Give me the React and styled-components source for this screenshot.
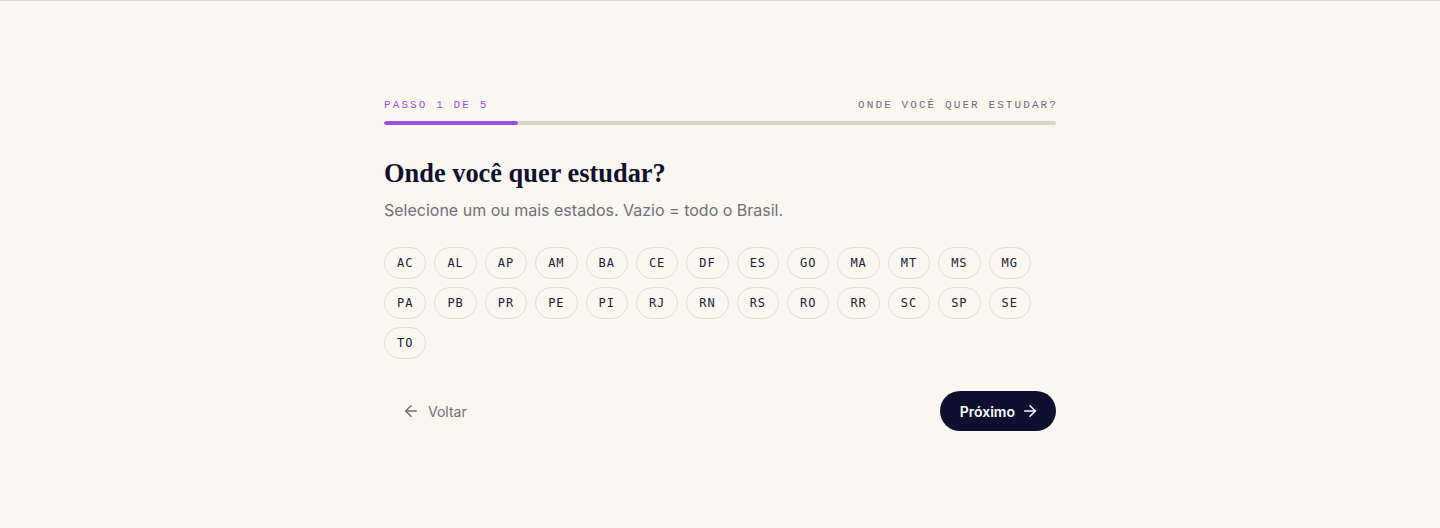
import React, { useState } from "react";
import styled, { createGlobalStyle } from "styled-components";
import { ArrowLeft, ArrowRight } from "lucide-react";

const STATES = [
  "AC", "AL", "AP", "AM", "BA", "CE", "DF", "ES", "GO", "MA", "MT", "MS", "MG",
  "PA", "PB", "PR", "PE", "PI", "RJ", "RN", "RS", "RO", "RR", "SC", "SP", "SE",
  "TO",
];

const TOTAL_STEPS = 5;

const GlobalStyle = createGlobalStyle`
  * { box-sizing: border-box; }
  html, body {
    margin: 0;
    padding: 0;
    background: #faf7f0;
  }
  body {
    font-family: Inter, "Noto Sans", sans-serif;
    color: #0f1030;
  }
`;

const Page = styled.div`
  min-height: 528px;
  border-top: 1px solid #d9d5ca;
  background: #faf7f0;
`;

const Wizard = styled.main`
  width: 672px;
  margin: 0 auto;
  padding-top: 96px;
`;

const StepHeader = styled.div`
  display: flex;
  justify-content: space-between;
  align-items: center;
  margin-bottom: 8px;
`;

const StepLabel = styled.span`
  font-family: "Liberation Mono", "DejaVu Sans Mono", monospace;
  font-size: 11px;
  line-height: 16px;
  letter-spacing: 0.19em;
  text-transform: uppercase;
  color: ${({ $accent }) => ($accent ? "#9b4fdc" : "#6d6f7d")};
  margin-right: ${({ $accent }) => ($accent ? "0" : "-2px")};
`;

const Track = styled.div`
  height: 4px;
  border-radius: 2px;
  background: #dad6c6;
  overflow: hidden;
`;

const Fill = styled.div`
  height: 100%;
  border-radius: 2px;
  background: #9b4fdc;
`;

const Title = styled.h1`
  margin: 32px 0 0;
  font-family: "Liberation Serif", "DejaVu Serif", serif;
  font-weight: 700;
  font-size: 26.4px;
  line-height: 33px;
  color: #0f1030;
`;

const Subtitle = styled.p`
  margin: 8px 0 0;
  font-size: 16px;
  line-height: 24px;
  color: #6d6f7d;
`;

const ChipGrid = styled.div`
  display: flex;
  flex-wrap: wrap;
  gap: 8px;
  margin-top: 25px;
`;

const Chip = styled.button`
  height: 32px;
  padding: 0 12px;
  border-radius: 999px;
  border: 1px solid ${({ $selected }) => ($selected ? "#9b4fdc" : "#e2ddcf")};
  background: ${({ $selected }) => ($selected ? "#f1e6fb" : "transparent")};
  font-family: "DejaVu Sans Mono", "Liberation Mono", monospace;
  font-size: 12px;
  letter-spacing: 0.08em;
  color: #1b1c36;
  cursor: pointer;
`;

const Actions = styled.div`
  display: flex;
  justify-content: space-between;
  align-items: center;
  margin-top: 32px;
`;

const BackButton = styled.button`
  display: flex;
  align-items: center;
  gap: 8px;
  height: 40px;
  padding: 0 18px;
  border: none;
  background: transparent;
  font-family: Inter, "Noto Sans", sans-serif;
  font-size: 14px;
  color: #6d6f7d;
  cursor: pointer;
`;

const NextButton = styled.button`
  display: flex;
  align-items: center;
  gap: 6px;
  height: 40px;
  padding: 0 17px 0 20px;
  border: none;
  border-radius: 999px;
  background: #0f1030;
  font-family: Inter, "Noto Sans", sans-serif;
  font-size: 14px;
  font-weight: 600;
  color: #ffffff;
  cursor: pointer;
`;

const App = () => {
  const [step] = useState(1);
  const [selected, setSelected] = useState([]);

  const toggle = (uf) => {
    setSelected((prev) =>
      prev.includes(uf) ? prev.filter((s) => s !== uf) : [...prev, uf]
    );
  };

  return (
    <>
      <GlobalStyle />
      <Page>
        <Wizard>
          <StepHeader>
            <StepLabel $accent>
              Passo {step} de {TOTAL_STEPS}
            </StepLabel>
            <StepLabel>Onde você quer estudar?</StepLabel>
          </StepHeader>
          <Track>
            <Fill style={{ width: `${(step / TOTAL_STEPS) * 100}%` }} />
          </Track>

          <Title>Onde você quer estudar?</Title>
          <Subtitle>Selecione um ou mais estados. Vazio = todo o Brasil.</Subtitle>

          <ChipGrid>
            {STATES.map((uf) => (
              <Chip
                key={uf}
                $selected={selected.includes(uf)}
                onClick={() => toggle(uf)}
              >
                {uf}
              </Chip>
            ))}
          </ChipGrid>

          <Actions>
            <BackButton>
              <ArrowLeft size={18} strokeWidth={2} />
              Voltar
            </BackButton>
            <NextButton>
              Próximo
              <ArrowRight size={18} strokeWidth={2} />
            </NextButton>
          </Actions>
        </Wizard>
      </Page>
    </>
  );
};

export default App;
